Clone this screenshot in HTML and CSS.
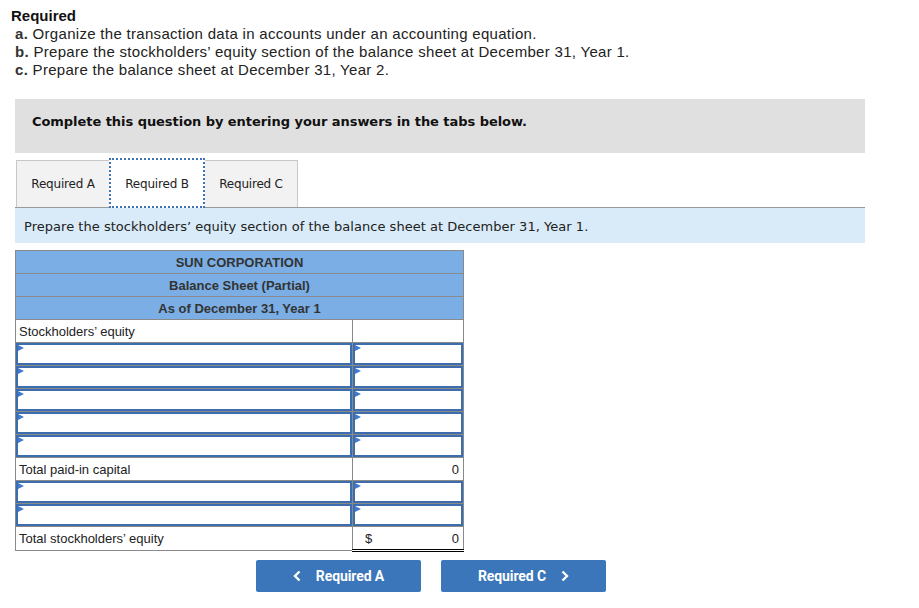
FILE: index.html
```html
<!DOCTYPE html>
<html>
<head>
<meta charset="utf-8">
<link rel="stylesheet" href="styles.css">
</head>
<body>
<div class="page">
  <div class="req">
    <div class="req-title">Required</div>
    <div class="req-line"><b>a.</b> Organize the transaction data in accounts under an accounting equation.</div>
    <div class="req-line"><b>b.</b> Prepare the stockholders’ equity section of the balance sheet at December 31, Year 1.</div>
    <div class="req-line"><b>c.</b> Prepare the balance sheet at December 31, Year 2.</div>
  </div>

  <div class="notice">Complete this question by entering your answers in the tabs below.</div>

  <div class="tabs">
    <div class="tab">Required A</div>
    <div class="tab active">Required B</div>
    <div class="tab">Required C</div>
  </div>
  <div class="instr">Prepare the stockholders’ equity section of the balance sheet at December 31, Year 1.</div>

  <table class="sheet">
    <colgroup><col class="c1"><col class="c2"></colgroup>
    <tr class="hd"><td colspan="2">SUN CORPORATION</td></tr>
    <tr class="hd"><td colspan="2">Balance Sheet (Partial)</td></tr>
    <tr class="hd"><td colspan="2">As of December 31, Year 1</td></tr>
    <tr><td class="lbl">Stockholders’ equity</td><td></td></tr>
    <tr><td class="inp"><div class="box"></div></td><td class="inp"><div class="box"></div></td></tr>
    <tr><td class="inp"><div class="box"></div></td><td class="inp"><div class="box"></div></td></tr>
    <tr><td class="inp"><div class="box"></div></td><td class="inp"><div class="box"></div></td></tr>
    <tr><td class="inp"><div class="box"></div></td><td class="inp"><div class="box"></div></td></tr>
    <tr><td class="inp"><div class="box"></div></td><td class="inp"><div class="box"></div></td></tr>
    <tr><td class="lbl">Total paid-in capital</td><td class="num single">0</td></tr>
    <tr><td class="inp"><div class="box"></div></td><td class="inp"><div class="box"></div></td></tr>
    <tr><td class="inp"><div class="box"></div></td><td class="inp"><div class="box"></div></td></tr>
    <tr><td class="lbl">Total stockholders’ equity</td><td class="num single double"><span class="dollar">$</span><span>0</span></td></tr>
  </table>

  <div class="nav">
    <div class="btn"><svg class="chev left" width="8" height="12" viewBox="0 0 8 12"><path d="M6.5 1.5 L2 6 L6.5 10.5" fill="none" stroke="#fff" stroke-width="2.4"/></svg>Required A</div>
    <div class="btn">Required C<svg class="chev right" width="8" height="12" viewBox="0 0 8 12"><path d="M1.5 1.5 L6 6 L1.5 10.5" fill="none" stroke="#fff" stroke-width="2.4"/></svg></div>
  </div>
</div>
</body>
</html>
```

FILE: styles.css
```css
html, body { margin: 0; padding: 0; background: #fff; }
.page { width: 919px; padding-top: 7px; }

.req { padding-left: 11px; font-family: "Liberation Sans", Arial, sans-serif; font-size: 15px; line-height: 18px; color: #222; }
.req-title { font-weight: bold; color: #111; }
.req-line { padding-left: 4px; letter-spacing: 0.3px; }
.req-line b { color: #333; }

.notice {
  margin: 20px 0 0 15px; width: 850px; height: 54px; box-sizing: border-box;
  background: #e0e0e0; padding-left: 17px;
  font-family: "DejaVu Sans", Verdana, sans-serif; font-weight: bold; font-size: 13px;
  line-height: 46px; color: #111; letter-spacing: -0.05px;
}

.tabs { display: flex; margin: 7px 0 0 16px; height: 47px; }
.tab {
  width: 94px; box-sizing: border-box; height: 47px;
  background: #f2f2f2; border: 1px solid #c8c8c8; border-bottom: none;
  font-family: "DejaVu Sans", Verdana, sans-serif; font-size: 12px; color: #222;
  display: flex; align-items: center; justify-content: center; letter-spacing: -0.2px;
}
.tab.active { background: #fff; border: 2px dotted #3f73b5; width: 96px; margin: -2px -1px 0; position: relative; z-index: 1; height: 50px; padding-top: 2px; }
.instr {
  margin-left: 15px; width: 850px; height: 36px; box-sizing: border-box;
  border-top: 1px solid #999; background: #d9ebf8;
  font-family: "DejaVu Sans", Verdana, sans-serif; font-size: 13px; color: #222;
  padding-left: 9px; line-height: 37px; letter-spacing: 0.03px;
}

.sheet { margin: 7px 0 0 15px; border-collapse: collapse; width: 448px; table-layout: fixed;
  font-family: "Liberation Sans", Arial, sans-serif; font-size: 13px; color: #222; }
.c1 { width: 337px; }
.c2 { width: 111px; }
.sheet td { border: 1px solid #8a8a8a; height: 22px; padding: 0; }
.hd td { background: #7aaee4; text-align: center; font-weight: bold; color: #333; }
.lbl { padding-left: 3px !important; }
.num { text-align: right; padding-right: 4px !important; }
.num.single { border-top: 1px solid #000 !important; }
.num.double { border-bottom: 3px double #000 !important; }
.num.double .dollar { float: left; padding-left: 12px; }
.inp .box { height: 18px; border: 2px solid #3c6eaf; position: relative; }
.inp .box::before {
  content: ""; position: absolute; left: 0; top: 0;
  border-left: 6px solid #3f7ad0; border-top: 3px solid transparent; border-bottom: 3px solid transparent;
}

.nav { display: flex; gap: 20px; margin: 8px 0 0 256px; }
.btn {
  width: 165px; height: 32px; background: #3a76b9; border-radius: 2px;
  color: #fff; font-family: Roboto, "Liberation Sans", sans-serif; font-weight: bold; font-size: 14px;
  display: flex; align-items: center; justify-content: center; letter-spacing: -0.1px;
}
.chev.left { margin-right: 15px; }
.chev.right { margin-left: 15px; }
```
